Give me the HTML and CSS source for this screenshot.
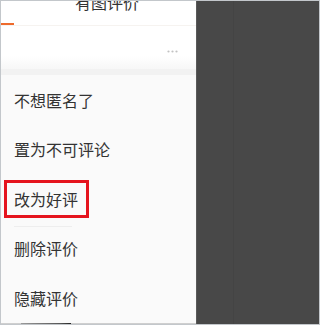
FILE: index.html
```html
<!DOCTYPE html>
<html lang="zh">
<head>
<meta charset="utf-8">
<link rel="stylesheet" href="styles.css">
</head>
<body>
<div class="frame">
  <div class="sheet">
    <div class="top">
      <div class="title">有图评价</div>
      <div class="tabline"><span class="indicator"></span></div>
      <div class="more-row">
        <svg class="more" width="11" height="3" viewBox="0 0 11 3"><circle cx="1.5" cy="1.5" r="1.1"/><circle cx="5.5" cy="1.5" r="1.1"/><circle cx="9.5" cy="1.5" r="1.1"/></svg>
      </div>
      <div class="band"></div>
    </div>
    <ul class="menu">
      <li class="item">不想匿名了</li>
      <li class="item">置为不可评论</li>
      <li class="item"><span class="highlight">改为好评</span></li>
      <li class="item divided">删除评价</li>
      <li class="item">隐藏评价</li>
    </ul>
    <div class="bottom-strip"><span class="thumb"></span></div>
  </div>
  <div class="overlay"><div class="stripe"></div></div>
</div>
</body>
</html>
```
FILE: styles.css
```css
html, body {
  margin: 0;
  padding: 0;
  background: #ffffff;
}
.frame {
  box-sizing: border-box;
  width: 320px;
  height: 325px;
  border: 1px solid #c3c7cb;
  display: flex;
  overflow: hidden;
  font-family: "Noto Sans CJK SC", "Noto Sans", sans-serif;
}
.sheet {
  width: 195px;
  display: flex;
  flex-direction: column;
  background: #fafafa;
  overflow: hidden;
}
.top {
  background: #ffffff;
  display: flex;
  flex-direction: column;
}
.title {
  height: 22px;
  margin-top: -10px;
  padding-left: 74px;
  font-size: 16px;
  line-height: 22px;
  color: #333333;
}
.tabline {
  height: 2px;
  margin-top: 10px;
  border-bottom: 1px solid #f6f3f0;
  display: flex;
}
.indicator {
  width: 13px;
  height: 2px;
  background: #ee6a2c;
}
.more-row {
  height: 43px;
  display: flex;
  justify-content: flex-end;
  align-items: center;
  padding: 8px 18px 0 0;
  box-sizing: border-box;
  background: linear-gradient(#ffffff 70%, #f7f7f7);
}
.more {
  display: block;
  fill: #c2c2c2;
}
.band {
  height: 6px;
  background: #f2f2f2;
}
.menu {
  list-style: none;
  margin: 0;
  padding: 0;
  flex: 1;
}
.item {
  height: 49.5px;
  display: flex;
  align-items: center;
  padding-left: 13px;
  font-size: 16px;
  color: #333333;
  position: relative;
}
.highlight {
  margin-left: -10px;
  padding: 0 8px 0 7px;
  border: 3px solid #e5141e;
  line-height: 32px;
}
.divided::before {
  content: "";
  position: absolute;
  left: 13px;
  top: 2px;
  width: 58px;
  height: 1px;
  background: #eeeeee;
}
.bottom-strip {
  height: 2px;
  background: #cfcfcf;
  display: flex;
}
.thumb {
  margin-left: 20px;
  width: 50px;
  height: 2px;
  background: linear-gradient(90deg, #9a9a9a, #555 80%, #222);
}
.overlay {
  flex: 1;
  background: #484848;
  border-left: 1px solid #5a5a5a;
  display: flex;
}
.stripe {
  margin-left: 36px;
  width: 1px;
  background: #444444;
}
```
